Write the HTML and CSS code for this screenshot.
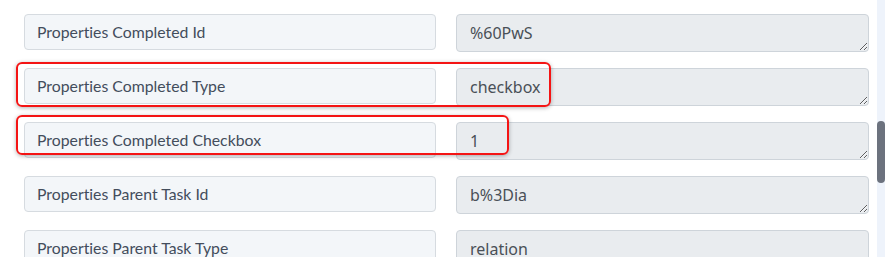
FILE: index.html
```html
<!DOCTYPE html>
<html>
<head>
<meta charset="utf-8">
<link rel="stylesheet" href="styles.css">
</head>
<body>
<div class="page">
  <main class="fields">
    <div class="row">
      <div class="label">Properties Completed Id</div>
      <textarea class="value" readonly>%60PwS</textarea>
    </div>
    <div class="row">
      <div class="label">Properties Completed Type</div>
      <textarea class="value" readonly>checkbox</textarea>
      <div class="highlight hl-type"></div>
    </div>
    <div class="row">
      <div class="label">Properties Completed Checkbox</div>
      <textarea class="value" readonly>1</textarea>
      <div class="highlight hl-check"></div>
    </div>
    <div class="row">
      <div class="label">Properties Parent Task Id</div>
      <textarea class="value" readonly>b%3Dia</textarea>
    </div>
    <div class="row">
      <div class="label">Properties Parent Task Type</div>
      <textarea class="value" readonly>relation</textarea>
    </div>
  </main>
  <div class="scrolltrack"><div class="thumb"></div></div>
</div>
</body>
</html>
```
FILE: styles.css
```css
html, body {
  margin: 0;
  padding: 0;
  background: #ffffff;
  overflow: hidden;
}
.page {
  display: flex;
  width: 890px;
  height: 257px;
  overflow: hidden;
}
.fields {
  width: 877px;
  padding: 14px 0 0 24px;
  box-sizing: border-box;
  display: flex;
  flex-direction: column;
  gap: 16px;
}
.row {
  position: relative;
  display: grid;
  grid-template-columns: 412px 413px;
  column-gap: 20px;
  align-items: start;
  height: 38px;
}
.label {
  height: 36px;
  box-sizing: border-box;
  background: #f3f6f9;
  border: 1px solid #d6dbe0;
  border-radius: 4px;
  padding: 0 12px 2px;
  display: flex;
  align-items: center;
  font-family: "Lato", "Open Sans", sans-serif;
  font-size: 15.8px;
  font-variant-ligatures: none;
  color: #434d5c;
}
.value {
  display: block;
  height: 38px;
  width: 413px;
  box-sizing: border-box;
  margin: 0;
  background: #e9ecef;
  border: 1px solid #ced4da;
  border-radius: 4px;
  padding: 6px 13px;
  font-family: "Noto Sans", "Open Sans", sans-serif;
  font-size: 16px;
  line-height: 24px;
  color: #495057;
  resize: vertical;
  overflow: hidden;
  outline: none;
}
.highlight {
  position: absolute;
  left: -8px;
  top: -6px;
  border: 2px solid #f41414;
  border-radius: 6px;
  box-shadow: 0 1px 4px rgba(0, 0, 0, 0.3);
  box-sizing: border-box;
  pointer-events: none;
}
.hl-type {
  width: 535px;
  height: 45px;
}
.hl-check {
  top: -7px;
  width: 493px;
  height: 40px;
}
.scrolltrack {
  width: 8px;
  height: 257px;
  background: #eef3fb;
  position: relative;
  flex: none;
}
.thumb {
  position: absolute;
  top: 121px;
  left: 0;
  width: 8px;
  height: 62px;
  border-radius: 4px;
  background: #6c727e;
}
```
